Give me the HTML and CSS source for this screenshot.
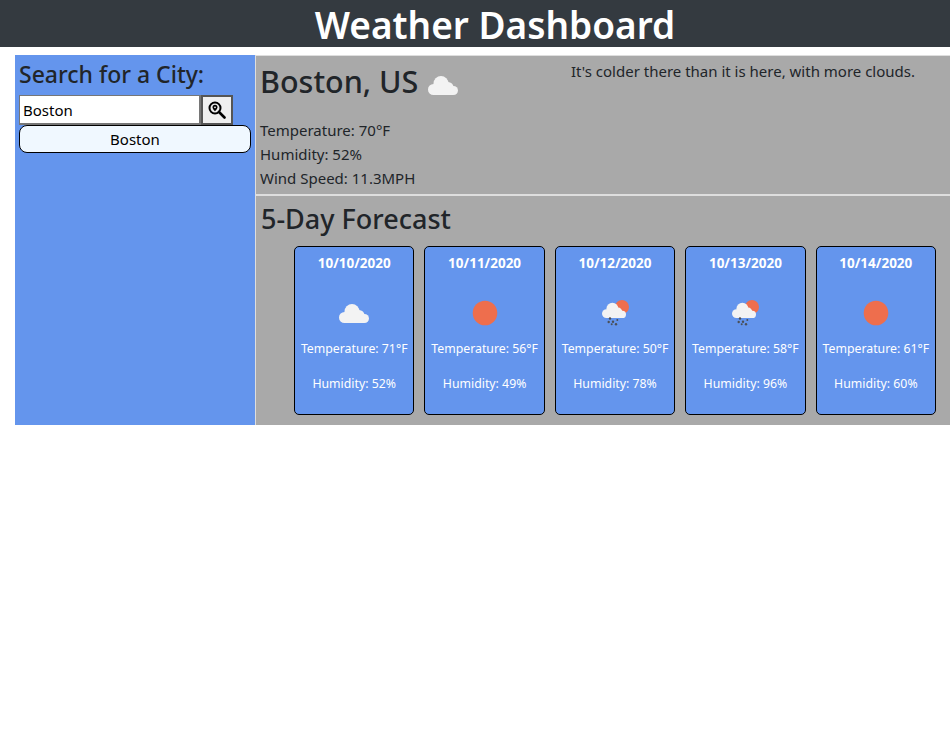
FILE: index.html
```html
<!DOCTYPE html>
<html lang="en">
<head>
<meta charset="utf-8">
<title>Weather Dashboard</title>
<link rel="stylesheet" href="styles.css">
</head>
<body>
<svg class="defs" width="0" height="0" aria-hidden="true">
  <defs>
    <g id="cloud-shape" fill="#f3f3f3">
      <circle cx="15.500" cy="29.500" r="5.500"/>
      <circle cx="23" cy="23.500" r="7.500"/>
      <circle cx="30" cy="27.500" r="5.500"/>
      <circle cx="35.500" cy="30.500" r="4.500"/>
      <rect x="15" y="26" width="20" height="9"/>
    </g>
    <symbol id="cloud" viewBox="0 0 50 50"><use href="#cloud-shape"/></symbol>
    <symbol id="sun" viewBox="0 0 50 50">
      <circle cx="25" cy="25" r="12.300" fill="#ee6e4d"/>
    </symbol>
    <symbol id="rain" viewBox="0 0 50 50">
      <circle cx="32" cy="19" r="7" fill="#ee6e4d"/>
      <use href="#cloud-shape" transform="translate(4 2) scale(.8)"/>
      <g fill="#4a4f58">
        <circle cx="20" cy="30.500" r="1.200"/><circle cx="18.700" cy="34" r="1.200"/><circle cx="23" cy="33.700" r="1.200"/>
        <circle cx="27.300" cy="32" r="1"/><circle cx="21.700" cy="36.300" r="1"/><circle cx="26" cy="36.300" r="1.200"/>
      </g>
    </symbol>
  </defs>
</svg>
<header class="topbar"><h1>Weather Dashboard</h1></header>
<div class="layout">
  <aside class="sidebar">
    <h2 class="search-title">Search for a City:</h2>
    <form class="search-form">
      <input class="search-input" type="text" value="Boston">
      <button class="search-button" type="button" aria-label="Search">
        <svg width="18" height="18" viewBox="0 0 18 18"><circle cx="7" cy="7" r="5.500" fill="none" stroke="#000" stroke-width="2"/><path d="M7 3.800a2.500 2.500 0 0 0-2.500 2.500c0 1.700 2.500 4 2.500 4s2.500-2.300 2.500-4A2.500 2.500 0 0 0 7 3.800z" fill="#000"/><circle cx="7" cy="6.300" r=".9" fill="#efefef"/><path d="M11 11l5.500 5.500" stroke="#000" stroke-width="2.600" stroke-linecap="round"/></svg>
      </button>
    </form>
    <button class="history-item" type="button">Boston</button>
  </aside>
  <main class="content">
    <section class="current">
      <div class="current-head">
        <h2 class="city">Boston, US <svg class="city-icon"><use href="#cloud"/></svg></h2>
        <p class="compare">It's colder there than it is here, with more clouds.</p>
      </div>
      <p class="stat">Temperature: 70°F</p>
      <p class="stat">Humidity: 52%</p>
      <p class="stat">Wind Speed: 11.3MPH</p>
    </section>
    <section class="forecast">
      <h3 class="forecast-title">5-Day Forecast</h3>
      <div class="cards">
        <article class="card"><h4>10/10/2020</h4><svg class="card-icon"><use href="#cloud"/></svg><p>Temperature: 71°F</p><p>Humidity: 52%</p></article>
        <article class="card"><h4>10/11/2020</h4><svg class="card-icon"><use href="#sun"/></svg><p>Temperature: 56°F</p><p>Humidity: 49%</p></article>
        <article class="card"><h4>10/12/2020</h4><svg class="card-icon"><use href="#rain"/></svg><p>Temperature: 50°F</p><p>Humidity: 78%</p></article>
        <article class="card"><h4>10/13/2020</h4><svg class="card-icon"><use href="#rain"/></svg><p>Temperature: 58°F</p><p>Humidity: 96%</p></article>
        <article class="card"><h4>10/14/2020</h4><svg class="card-icon"><use href="#sun"/></svg><p>Temperature: 61°F</p><p>Humidity: 60%</p></article>
      </div>
    </section>
  </main>
</div>
</body>
</html>
```
FILE: styles.css
```css
* { box-sizing: border-box; }
html, body { margin: 0; padding: 0; background: #fff; overflow: hidden; }
body { font-family: "Noto Sans", "Open Sans", sans-serif; color: #212529; font-size: 16px; line-height: 24px; }
.defs { position: absolute; }
h1, h2, h3, h4, p { margin: 0; }
.topbar { height: 47px; background: #343a40; text-align: center; color: #fff; padding-left: 40px; }
.topbar h1 { font-size: 37px; font-weight: 600; line-height: 50px; }
.layout { display: flex; margin: 8px 0 0 15px; height: 370px; }
.sidebar { width: 240px; background: #6495ed; padding: 3px 4px 4px; }
.search-title { font-size: 23px; font-weight: 500; line-height: 32px; margin-bottom: 5px; }
.search-form { display: flex; height: 30px; }
.search-input { width: 182px; height: 30px; padding: 1px 3px; font: inherit; font-size: 15px; border: 1px solid #767676; border-width: 1px 2px 2px 1px; color: #000; background: #fff; }
.search-button { width: 32px; height: 30px; padding: 0; display: flex; align-items: center; justify-content: center; background: #efefef; border: 2px solid #555; }
.history-item { display: block; width: 232px; height: 28px; padding: 0; font: inherit; font-size: 15px; color: #000; background: #f0f8ff; border: 1px solid #000; border-radius: 8px; }
.content { flex: 1; display: flex; flex-direction: column; min-width: 0; }
.current { height: 140px; background: #a9a9a9; border: 1px solid #dedede; border-width: 1px 0 0 1px; padding: 0 4px; }
.current-head { display: flex; height: 62px; }
.city { width: 311px; font-size: 30.500px; font-weight: 500; line-height: 38px; padding-top: 4px; white-space: nowrap; }
.city-icon { width: 50px; height: 50px; vertical-align: -17px; margin-left: -8px; }
.compare { font-size: 15px; line-height: 24px; padding-top: 3px; white-space: nowrap; }
.stat { font-size: 15px; line-height: 24px; }
.forecast { flex: 1; background: #a9a9a9; border-top: 2px solid #dedede; border-left: 1px solid #dedede; padding: 6px 14px 10px 5px; }
.forecast-title { font-size: 27px; font-weight: 500; line-height: 34px; margin-bottom: 10px; }
.cards { display: flex; gap: 10px; margin-left: 33px; }
.card { flex: 1; height: 169px; background: #6495ed; border: 1px solid #000; border-radius: 5px; color: #fff; text-align: center; font-size: 12.300px; padding-top: 4px; }
.card h4 { font-size: 13.500px; font-weight: 700; line-height: 24px; }
.card-icon { display: block; width: 50px; height: 50px; margin: 13px auto 1px; }
.card p { line-height: 20px; margin-bottom: 15px; white-space: nowrap; }
```
